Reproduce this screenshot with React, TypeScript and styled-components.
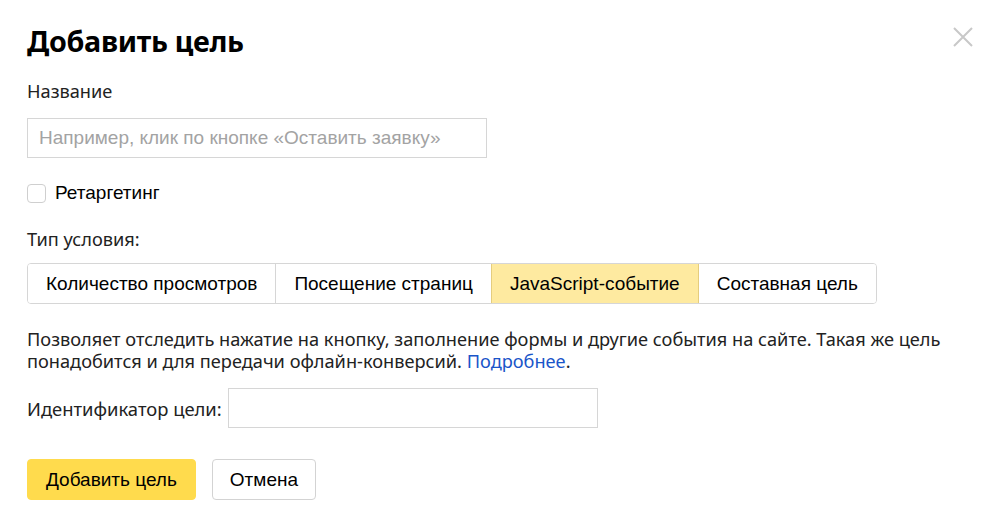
import React, { useState } from 'react'
import styled, { createGlobalStyle } from 'styled-components'

const GlobalStyle = createGlobalStyle`
  html, body {
    margin: 0;
    padding: 0;
    background: #fff;
  }
  body {
    font-family: 'Noto Sans', 'Liberation Sans', Arial, sans-serif;
    color: #000;
  }
`

const Dialog = styled.div`
  position: relative;
  width: 1000px;
  height: 518px;
  box-sizing: border-box;
  padding: 23px 27px 0;
  display: flex;
  flex-direction: column;
  align-items: flex-start;
`

const Title = styled.h1`
  margin: 0;
  font-size: 28.7px;
  font-weight: 700;
  line-height: 36px;
  letter-spacing: -0.3px;
`

const CloseButton = styled.button`
  position: absolute;
  top: 26px;
  right: 26px;
  width: 22px;
  height: 22px;
  padding: 0;
  border: none;
  background: none;
  cursor: pointer;
`

const Label = styled.div<{ top: number }>`
  margin-top: ${({ top }) => top}px;
  font-size: 18.2px;
  line-height: 22px;
  color: #222;
`

const TextInput = styled.input<{ w: number }>`
  box-sizing: border-box;
  width: ${({ w }) => w}px;
  height: 40px;
  border: 1px solid #d6d6d6;
  padding: 0 11px;
  font-family: 'Liberation Sans', Arial, sans-serif;
  font-size: 19px;
  color: #000;
  outline: none;
  &::placeholder {
    color: #a3a3a3;
  }
`

const NameInput = styled(TextInput)`
  margin-top: 16px;
`

const CheckRow = styled.label`
  margin-top: 24px;
  display: flex;
  align-items: center;
  gap: 9px;
  font-family: 'Liberation Sans', Arial, sans-serif;
  font-size: 19px;
  line-height: 22px;
  cursor: pointer;
`

const CheckBox = styled.span`
  box-sizing: border-box;
  width: 19px;
  height: 19px;
  border: 1px solid #cfcfcf;
  border-radius: 4px;
  background: #fff;
`

const Tabs = styled.div`
  margin-top: 13px;
  display: flex;
  border: 1px solid #d6d6d6;
  border-radius: 4px;
  overflow: hidden;
`

const Tab = styled.button<{ active?: boolean }>`
  height: 39px;
  box-sizing: border-box;
  padding: 0 18px;
  border: none;
  border-left: 1px solid ${({ active }) => (active ? '#e5cd7e' : '#d6d6d6')};
  background: ${({ active }) => (active ? '#feeaa0' : '#fff')};
  font-family: 'Liberation Sans', Arial, sans-serif;
  font-size: 19px;
  color: #000;
  cursor: pointer;
  &:first-child {
    border-left: none;
  }
  ${({ active }) => active && `border-right: 1px solid #e5cd7e; margin-right: -1px; position: relative;`}
`

const Description = styled.p`
  margin: 24px 0 0;
  width: 960px;
  font-size: 18.2px;
  line-height: 22px;
  color: #222;
`

const Link = styled.a`
  color: #1a55c9;
  text-decoration: none;
`

const IdRow = styled.div`
  margin-top: 16px;
  display: flex;
  align-items: center;
  gap: 6px;
  font-size: 18.4px;
  color: #222;
`

const Actions = styled.div`
  margin-top: 31px;
  display: flex;
  gap: 16px;
`

const Button = styled.button<{ primary?: boolean }>`
  height: 41px;
  box-sizing: border-box;
  padding: 0 ${({ primary }) => (primary ? 18 : 17)}px;
  border-radius: 4px;
  border: 1px solid ${({ primary }) => (primary ? '#ffdb4d' : '#d3d3d3')};
  background: ${({ primary }) => (primary ? '#ffdb4d' : '#fff')};
  font-family: 'Liberation Sans', Arial, sans-serif;
  font-size: 19px;
  color: #000;
  cursor: pointer;
`

const tabs = ['Количество просмотров', 'Посещение страниц', 'JavaScript-событие', 'Составная цель']

const App: React.FC = () => {
  const [active, setActive] = useState(2)
  return (
    <>
      <GlobalStyle />
      <Dialog>
        <Title>Добавить цель</Title>
        <CloseButton aria-label="Закрыть">
          <svg width="22" height="22" viewBox="0 0 22 22">
            <path d="M2 2L20 20M20 2L2 20" stroke="#c8c8c8" strokeWidth="2" />
          </svg>
        </CloseButton>
        <Label top={21}>Название</Label>
        <NameInput w={460} placeholder="Например, клик по кнопке «Оставить заявку»" />
        <CheckRow>
          <CheckBox />
          Ретаргетинг
        </CheckRow>
        <Label top={24}>Тип условия:</Label>
        <Tabs>
          {tabs.map((t, i) => (
            <Tab key={t} active={i === active} onClick={() => setActive(i)}>
              {t}
            </Tab>
          ))}
        </Tabs>
        <Description>
          Позволяет отследить нажатие на кнопку, заполнение формы и другие события на сайте. Такая же цель
          <br />
          понадобится и для передачи офлайн-конверсий. <Link href="#">Подробнее</Link>.
        </Description>
        <IdRow>
          Идентификатор цели:
          <TextInput w={370} />
        </IdRow>
        <Actions>
          <Button primary>Добавить цель</Button>
          <Button>Отмена</Button>
        </Actions>
      </Dialog>
    </>
  )
}

export default App
